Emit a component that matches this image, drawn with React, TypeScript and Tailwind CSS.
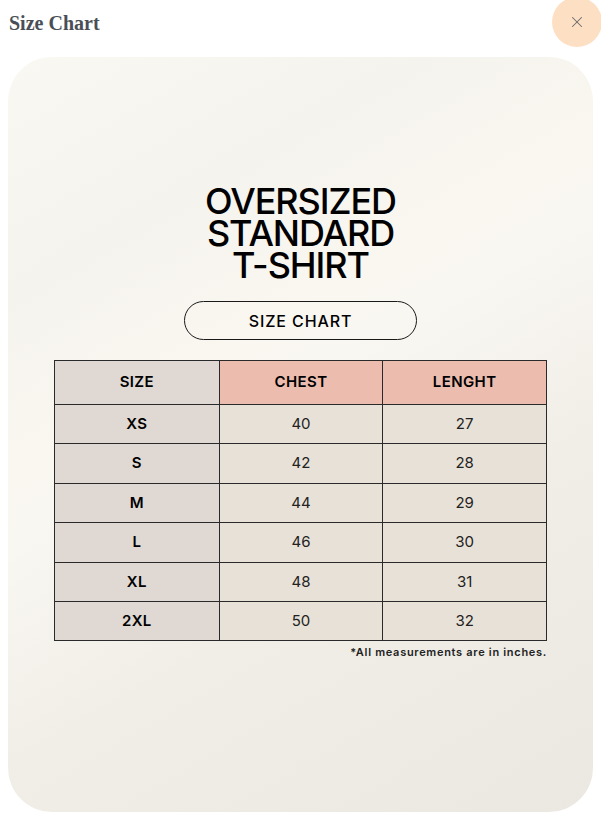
import { X } from "lucide-react";

const rows = [
  { size: "XS", chest: "40", length: "27" },
  { size: "S", chest: "42", length: "28" },
  { size: "M", chest: "44", length: "29" },
  { size: "L", chest: "46", length: "30" },
  { size: "XL", chest: "48", length: "31" },
  { size: "2XL", chest: "50", length: "32" },
];

export default function App() {
  return (
    <div className="relative h-[824px] w-[601px] overflow-hidden bg-white">
      <div className="flex h-[57px] items-start justify-between">
        <h2 className="pl-[9px] pt-[11px] font-['Liberation_Serif',serif] text-[20px] font-bold leading-[25px] text-[#4a4f57]">
          Size Chart
        </h2>
      </div>
      <button className="absolute right-[-1px] top-[-3px] flex h-[50px] w-[50px] items-center justify-center rounded-full bg-[#fddfc4] text-[#6b6b6b]">
        <X size={18} strokeWidth={1.4} />
      </button>

      <div className="mx-[8px] flex h-[755px] w-[585px] flex-col items-center rounded-[44px] bg-[linear-gradient(150deg,#faf8f2_0%,#f5f3ed_22%,#f9f7f0_38%,#f9f7f1_45%,#f1eee8_65%,#ebe8e2_100%)] font-['Inter',sans-serif] text-black">
        <h1 className="mt-[128px] text-center text-[36px] font-medium leading-[32px] tracking-[-1.1px]">
          OVERSIZED
          <br />
          STANDARD
          <br />
          T-SHIRT
        </h1>

        <div className="mt-[20px] flex h-[39px] w-[233px] items-center justify-center rounded-full border-[1.5px] border-[#1a1a1a] text-[16px] font-medium tracking-[0.9px]">
          SIZE CHART
        </div>

        <div className="mt-[20px] w-[493px] border border-[#2a2a2a]">
          <div className="grid h-[43px] grid-cols-3 text-[15px] font-semibold tracking-[0.4px]">
            <div className="flex items-center justify-center bg-[#dfd8d3]">SIZE</div>
            <div className="flex items-center justify-center border-l border-[#2a2a2a] bg-[#ecbcaf]">CHEST</div>
            <div className="flex items-center justify-center border-l border-[#2a2a2a] bg-[#ecbcaf]">LENGHT</div>
          </div>
          {rows.map((r) => (
            <div key={r.size} className="grid h-[39.4px] grid-cols-3 border-t border-[#2a2a2a] text-[15px]">
              <div className="flex items-center justify-center bg-[#dfd8d3] font-semibold tracking-[0.4px]">{r.size}</div>
              <div className="flex items-center justify-center border-l border-[#2a2a2a] bg-[#e8e1d7] text-[#222]">{r.chest}</div>
              <div className="flex items-center justify-center border-l border-[#2a2a2a] bg-[#e8e1d7] text-[#222]">{r.length}</div>
            </div>
          ))}
        </div>
        <div className="mt-[3px] w-[493px] text-right text-[11px] font-semibold tracking-[0.7px] text-[#222]">
          *All measurements are in inches.
        </div>
      </div>
    </div>
  );
}
